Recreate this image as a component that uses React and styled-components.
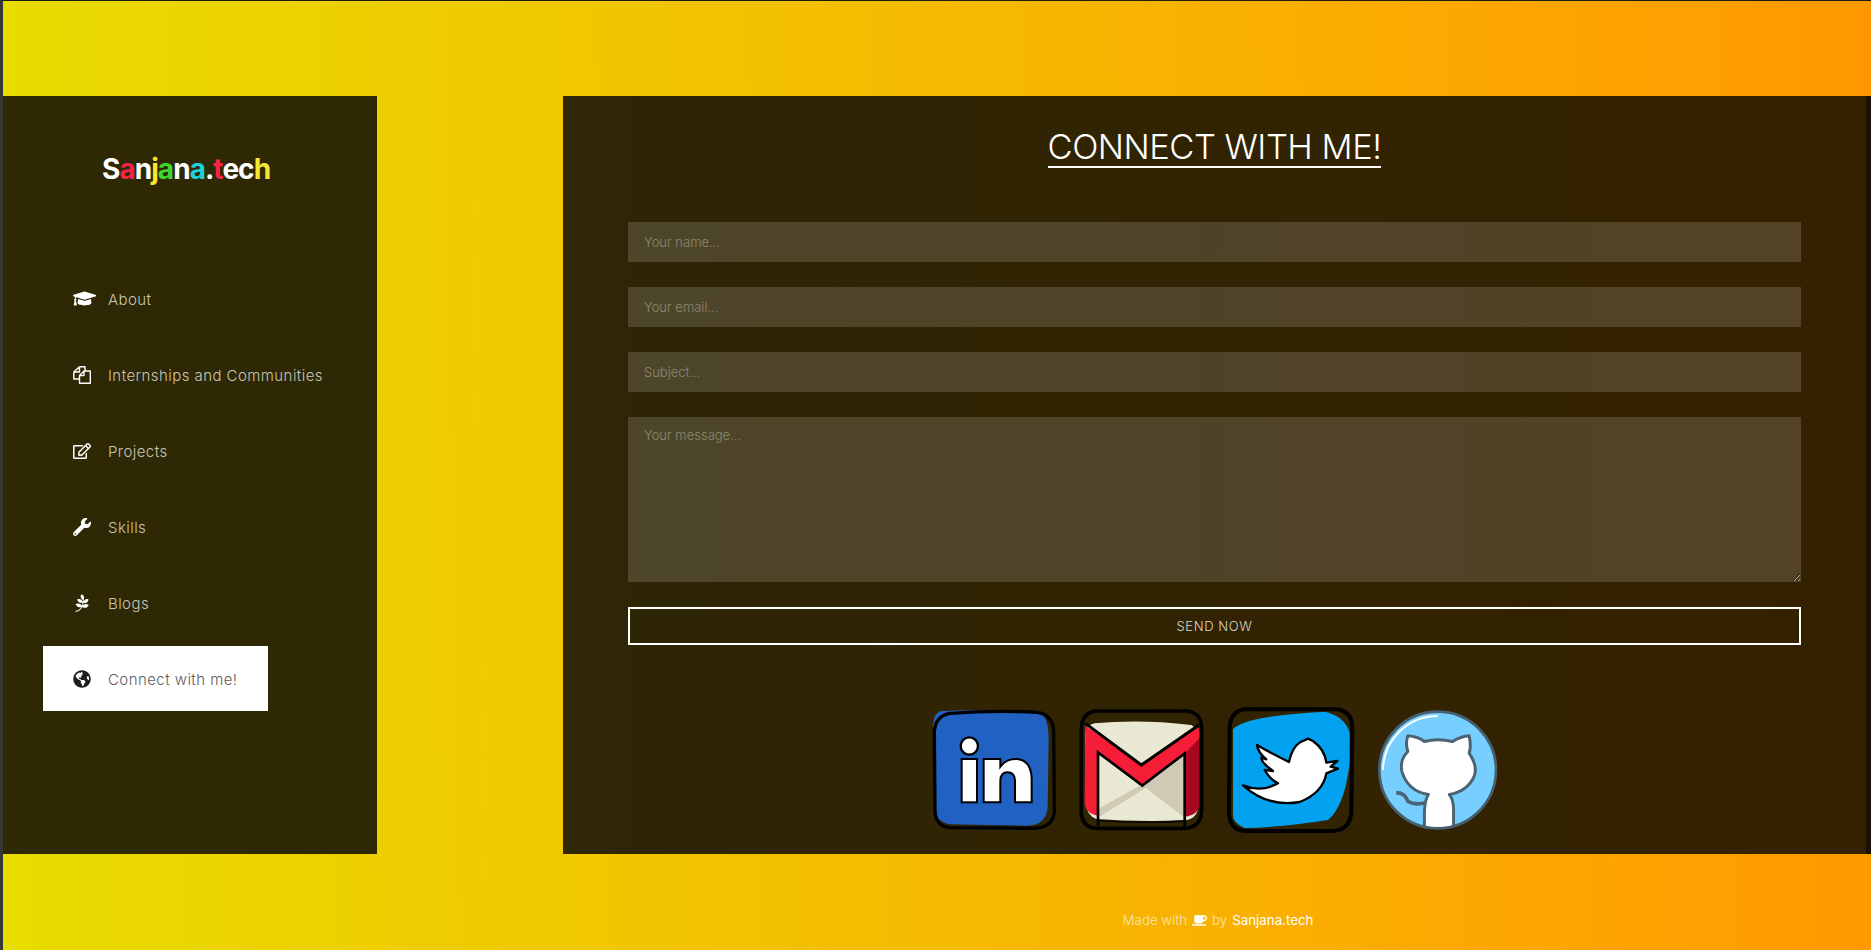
import { createGlobalStyle, styled } from "styled-components";
import { FaGraduationCap, FaRegEdit, FaWrench, FaPagelines, FaGlobeAmericas, FaCoffee } from "react-icons/fa";

const GlobalStyle = createGlobalStyle`
  * { box-sizing: border-box; }
  html, body { margin: 0; padding: 0; }
  body { font-family: Inter, "Open Sans", sans-serif; font-weight: 300; overflow: hidden; }
`;

const Page = styled.div`
  width: 1871px;
  height: 950px;
  padding-top: 95px;
  border-top: 1px solid #1c1c10;
  border-left: 3px solid #37373a;
  background: linear-gradient(89deg, #e8dc00 0%, #f0c800 30%, #ffa000 90%, #ff9800 100%);
`;

const Columns = styled.div`
  display: grid;
  grid-template-columns: 374px 1308px;
  column-gap: 186px;
  height: 758px;
`;

const Sidebar = styled.aside`
  background: #2e2805;
  padding: 58px 0 0 40px;
`;

const Logo = styled.div`
  margin-left: 59px;
  height: 112px;
  font-family: Inter, sans-serif;
  font-size: 28px;
  line-height: 30px;
  font-weight: 700;
  letter-spacing: -0.95px;
  color: #fff;
`;

const Letter = styled.span`
  color: ${(p) => p.$color};
`;

const Nav = styled.nav`
  display: flex;
  flex-direction: column;
  gap: 11px;
`;

const NavItem = styled.a`
  display: flex;
  align-items: center;
  width: 225px;
  height: 65px;
  padding-left: 30px;
  white-space: nowrap;
  font-size: 15px;
  letter-spacing: 0.44px;
  color: ${(p) => (p.$active ? "#5d5d62" : "#c9c6b8")};
  background: ${(p) => (p.$active ? "#fff" : "transparent")};
`;

const NavIcon = styled.span`
  display: flex;
  flex: 0 0 35px;
  font-size: ${(p) => p.$size || 18}px;
  color: ${(p) => (p.$active ? "#1d1d1d" : "#fff")};
`;

const NavLabel = styled.span`
  padding-top: 2px;
`;

const Main = styled.main`
  display: flex;
  flex-direction: column;
  padding: 26px 65px 0;
  border-right: 5px solid #1a1003;
  background: linear-gradient(90deg, #2e2605, #352100);
`;

const Title = styled.h1`
  align-self: center;
  margin: 0 0 54px;
  height: 46px;
  font-size: 34.5px;
  line-height: 49px;
  font-weight: 300;
  letter-spacing: -0.5px;
  color: #fff;
  border-bottom: 2px solid #fff;
`;

const Form = styled.form`
  display: flex;
  flex-direction: column;
  gap: 25px;
`;

const fieldStyle = `
  display: block;
  width: 100%;
  border: 0;
  outline: 0;
  padding: 0 16px;
  font-family: Inter, sans-serif;
  font-size: 13px;
  font-weight: 300;
  color: #fff;
  background: rgba(255, 255, 255, 0.15);
  &::placeholder { color: #8d8873; opacity: 1; }
`;

const Field = styled.input`
  ${fieldStyle}
  height: 40px;
`;

const Message = styled.textarea`
  ${fieldStyle}
  height: 165px;
  padding-top: 10px;
  resize: vertical;
`;

const SendButton = styled.button`
  height: 38px;
  border: 2px solid #fff;
  background: transparent;
  font-family: Inter, sans-serif;
  font-size: 13px;
  font-weight: 300;
  letter-spacing: 0.6px;
  color: #d9d6cc;
`;

const Socials = styled.div`
  display: flex;
  justify-content: center;
  align-items: center;
  gap: 23px;
  margin-top: 62px;
`;

const Footer = styled.footer`
  display: flex;
  justify-content: center;
  align-items: center;
  gap: 5px;
  padding: 58px 0 0 562px;
  font-size: 13.3px;
  color: #fbe6b0;
  svg { font-size: 15px; color: #fff; }
`;

const FooterBrand = styled.span`
  font-weight: 400;
  color: #fff;
`;

const FilesIcon = () => (
  <svg width="18" height="18" viewBox="0 0 18 18" fill="none" stroke="#fff" strokeWidth="1.4" strokeLinejoin="round">
    <path d="M6.5.8H12V5M6.5.8V6H.8M6.5.8.8 6V13H6" />
    <path d="M11 5H17.3V17.3H6.5V9.5Z" />
    <path d="M11 5V9.5H6.5" />
  </svg>
);

const LinkedinIcon = () => (
  <svg width="124" height="122" viewBox="35 42 372 366">
    <path d="M62 48Q200 42 360 55Q385 70 385 130L382 340Q375 392 320 392L90 388Q40 380 40 330L38 90Q40 55 62 48Z" fill="#2061c2" />
    <path d="M90 55Q220 45 350 52Q398 58 400 110L402 350Q398 398 340 400L90 398Q45 395 44 345L42 110Q45 62 90 55Z" fill="none" stroke="#000" strokeWidth="10" />
    <circle cx="147" cy="153" r="26" fill="#fff" stroke="#000" strokeWidth="7" />
    <rect x="124" y="192" width="46" height="130" fill="#fff" stroke="#000" strokeWidth="6" />
    <path d="M190 192H240V215Q258 190 290 192Q332 196 334 250V322H284V255Q282 232 262 232Q240 232 240 258V322H190Z" fill="#fff" stroke="#000" strokeWidth="6" />
  </svg>
);

const GmailIcon = () => (
  <svg width="125" height="122" viewBox="478 42 375 366">
    <path d="M525 85Q660 72 815 90Q835 100 835 130V340Q830 375 790 376Q660 382 530 372Q500 360 497 320V110Q500 90 525 85Z" fill="#e8e8d3" />
    <path d="M795 178 670 272 795 368Z" fill="#d0cab5" />
    <path d="M535 342 668 268 682 276 535 368Z" fill="#d0cab5" />
    <path d="M497 92 665 208 836 96Q842 110 838 135L800 172 668 272 535 172V362Q495 355 495 320Z" fill="#f61e36" />
    <path d="M797 174 838 130V335Q835 358 797 366Z" fill="#a8081f" />
    <path d="M530 48H800Q845 52 846 100V350Q842 398 795 400H530Q486 396 485 350V100Q488 52 530 48Z" fill="none" stroke="#000" strokeWidth="11" />
    <path d="M497 85 665 210 838 90" fill="none" stroke="#000" strokeWidth="9" />
    <path d="M535 392V172L668 272 795 175V396" fill="none" stroke="#000" strokeWidth="8" />
    <path d="M530 376Q660 386 795 378" fill="none" stroke="#000" strokeWidth="4" />
  </svg>
);

const TwitterIcon = () => (
  <svg width="128" height="126" viewBox="47 33 384 378">
    <path d="M65 100Q100 60 340 47Q400 60 415 110V200Q400 330 350 372Q200 395 100 396Q60 380 65 350Z" fill="#03a2f0" />
    <path d="M100 40H375Q422 45 423 95L420 350Q415 402 365 405H100Q55 402 53 350L55 95Q58 45 100 40Z" fill="none" stroke="#000" strokeWidth="12" />
    <path d="M137 147Q180 172 233 198Q245 145 275 135L290 128 305 135Q340 160 345 200L378 195 358 212 380 218 345 232Q335 290 265 318Q170 335 95 268Q150 290 200 262Q175 250 160 222L185 225Q150 200 150 185L165 190Q140 170 137 147Z" fill="#fff" stroke="#000" strokeWidth="7" strokeLinejoin="round" />
  </svg>
);

const GithubIcon = () => (
  <svg width="120" height="120" viewBox="500 40 362 362">
    <defs>
      <clipPath id="github-disc">
        <circle cx="680" cy="221" r="174" />
      </clipPath>
    </defs>
    <circle cx="680" cy="221" r="174" fill="#77cfff" />
    <g clipPath="url(#github-disc)">
      <path d="M555 290Q580 288 590 315Q610 328 645 320" fill="none" stroke="#4a6473" strokeWidth="11" />
      <path d="M590 118Q620 120 640 135Q680 125 725 135Q750 120 775 118Q782 150 775 170Q802 210 790 240Q770 285 715 295Q728 310 728 340V410H640V345Q642 310 652 295Q590 285 572 225Q565 190 590 165Q582 140 590 118Z" fill="#fff" stroke="#4a6473" strokeWidth="9" strokeLinejoin="round" />
    </g>
    <path d="M515 221A165 165 0 0 1 680 58" fill="none" stroke="#fff" strokeWidth="6" />
    <circle cx="680" cy="221" r="176" fill="none" stroke="#46606f" strokeWidth="8" />
  </svg>
);

const logoLetters = [
  ["S", "#fff"], ["a", "#f5224a"], ["n", "#fff"], ["j", "#f7e62f"], ["a", "#3fd52f"], ["n", "#fff"],
  ["a", "#1fd0d8"], [".", "#fff"], ["t", "#f5224a"], ["e", "#fff"], ["c", "#fff"], ["h", "#f7e62f"],
];

const navItems = [
  { label: "About", icon: <FaGraduationCap />, size: 23 },
  { label: "Internships and Communities", icon: <FilesIcon /> },
  { label: "Projects", icon: <FaRegEdit /> },
  { label: "Skills", icon: <FaWrench /> },
  { label: "Blogs", icon: <FaPagelines /> },
  { label: "Connect with me!", icon: <FaGlobeAmericas />, active: true },
];

const App = () => {
  return (
    <Page>
      <GlobalStyle />
      <Columns>
        <Sidebar>
          <Logo>
            {logoLetters.map(([char, color], i) => (
              <Letter key={i} $color={color}>{char}</Letter>
            ))}
          </Logo>
          <Nav>
            {navItems.map((item) => (
              <NavItem key={item.label} $active={item.active}>
                <NavIcon $active={item.active} $size={item.size}>{item.icon}</NavIcon>
                <NavLabel>{item.label}</NavLabel>
              </NavItem>
            ))}
          </Nav>
        </Sidebar>
        <Main>
          <Title>CONNECT WITH ME!</Title>
          <Form>
            <Field placeholder="Your name..." />
            <Field placeholder="Your email..." />
            <Field placeholder="Subject..." />
            <Message placeholder="Your message..." />
            <SendButton type="button">SEND NOW</SendButton>
          </Form>
          <Socials>
            <LinkedinIcon />
            <GmailIcon />
            <TwitterIcon />
            <GithubIcon />
          </Socials>
        </Main>
      </Columns>
      <Footer>
        Made with <FaCoffee /> by <FooterBrand>Sanjana.tech</FooterBrand>
      </Footer>
    </Page>
  );
};

export default App;
